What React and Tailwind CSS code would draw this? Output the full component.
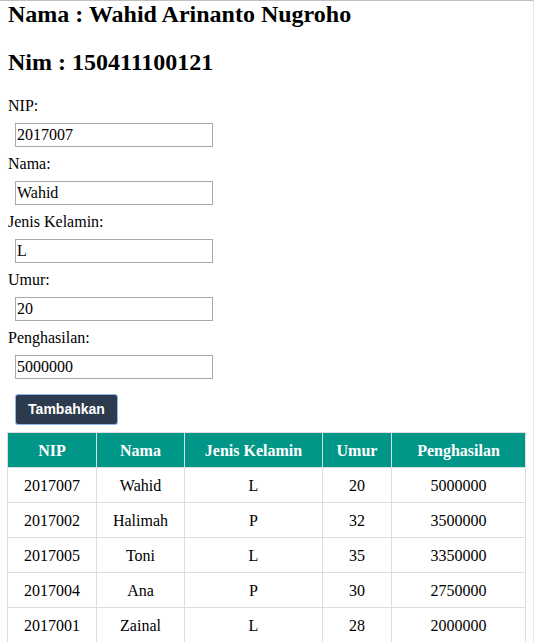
import { useState } from 'react'

const FIELDS = [
  { key: 'nip', label: 'NIP:' },
  { key: 'nama', label: 'Nama:' },
  { key: 'jk', label: 'Jenis Kelamin:' },
  { key: 'umur', label: 'Umur:' },
  { key: 'gaji', label: 'Penghasilan:' },
]

const ROWS = [
  ['2017007', 'Wahid', 'L', '20', '5000000'],
  ['2017002', 'Halimah', 'P', '32', '3500000'],
  ['2017005', 'Toni', 'L', '35', '3350000'],
  ['2017004', 'Ana', 'P', '30', '2750000'],
  ['2017001', 'Zainal', 'L', '28', '2000000'],
]

const HEADS = [
  { label: 'NIP', w: 'w-[89px]' },
  { label: 'Nama', w: 'w-[88px]' },
  { label: 'Jenis Kelamin', w: 'w-[138px]' },
  { label: 'Umur', w: 'w-[69px]' },
  { label: 'Penghasilan', w: 'w-[134px]' },
]

export default function App() {
  const [form, setForm] = useState({
    nip: '2017007',
    nama: 'Wahid',
    jk: 'L',
    umur: '20',
    gaji: '5000000',
  })

  return (
    <div className="min-h-[642px] border-t border-r border-t-[#bfbfbf] border-r-[#e6e6e6] bg-white pl-2 font-['Liberation_Serif',serif] text-base text-black">
      <h2 className="text-2xl font-bold leading-[27.6px]">Nama : Wahid Arinanto Nugroho</h2>
      <h2 className="mt-5 text-2xl font-bold leading-[27.6px]">Nim : 150411100121</h2>

      <form className="mt-[21px]" onSubmit={(e) => e.preventDefault()}>
        {FIELDS.map((f) => (
          <div key={f.key}>
            <label className="block leading-[18px]">{f.label}</label>
            <input
              className="my-2 ml-[7px] block h-6 w-[198px] border border-[#a9a9a9] px-[1px] leading-[18px] outline-none"
              value={form[f.key]}
              onChange={(e) => setForm({ ...form, [f.key]: e.target.value })}
            />
          </div>
        ))}
        <button
          type="submit"
          className="mt-[15px] ml-[7px] block h-[31px] w-[103px] rounded-[3px] border border-solid border-[#8fb5f2] bg-[#2d3b4e] font-['Liberation_Sans',Arial,sans-serif] text-[14px] font-bold text-white"
        >
          Tambahkan
        </button>
      </form>

      <table className="mt-[7px] -ml-px w-[518px] table-fixed border-collapse text-center">
        <thead>
          <tr className="bg-[#009688] text-white">
            {HEADS.map((h) => (
              <th key={h.label} className={`${h.w} border border-[#dddddd] pt-[9px] pb-[7px] font-bold leading-[18px]`}>
                {h.label}
              </th>
            ))}
          </tr>
        </thead>
        <tbody>
          {ROWS.map((r) => (
            <tr key={r[0]}>
              {r.map((c, i) => (
                <td key={i} className="border border-[#dddddd] pt-[9px] pb-[7px] leading-[18px]">
                  {c}
                </td>
              ))}
            </tr>
          ))}
        </tbody>
      </table>
    </div>
  )
}
